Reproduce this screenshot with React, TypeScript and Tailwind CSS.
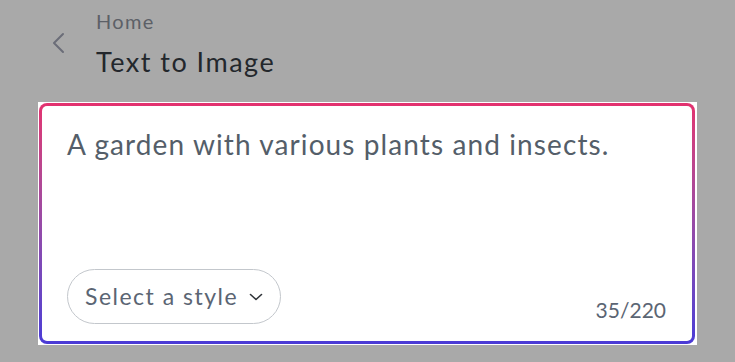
import React from "react";

export default function App() {
  return (
    <div
      className="w-[735px] h-[362px] bg-[#a9a9a9] overflow-hidden"
      style={{ fontFamily: "Lato, 'Noto Sans', sans-serif" }}
    >
      <div className="flex pl-[52px] pt-[8px] h-[102px] items-start">
        <div className="w-[44px] pt-[24px]">
          <svg width="13" height="22" viewBox="0 0 13 22" fill="none">
            <path d="M11 2 L2 11 L11 20" stroke="#6b6d78" strokeWidth="2" strokeLinecap="round" strokeLinejoin="round" />
          </svg>
        </div>
        <div className="flex flex-col">
          <div className="text-[20px] leading-[26px] text-[#5c6067] tracking-[1.3px]">Home</div>
          <div className="mt-[12px] text-[27px] leading-[32px] text-[#23272c] tracking-[1.5px]">Text to Image</div>
        </div>
      </div>
      <div className="ml-[38px] w-[659px] h-[243px] bg-white p-[1px] pr-[2px] pb-[1px]">
        <div className="h-full w-full rounded-[8px] p-[3px] bg-gradient-to-b from-[#e3316f] to-[#4a3ad6]">
          <div className="h-full w-full rounded-[5px] bg-white flex flex-col justify-between pl-[25px] pr-[26px] pt-[20px] pb-[17px]">
            <div className="text-[28px] leading-[36px] text-[#545e69] tracking-[1.1px]">
              A garden with various plants and insects.
            </div>
            <div className="flex items-end justify-between">
              <div className="h-[55px] w-[214px] rounded-full border-[1.5px] border-[#c3c7cc] flex items-center pl-[17px] gap-[11px]">
                <span className="text-[23px] text-[#5b6573] leading-none tracking-[1.5px]">Select a style</span>
                <svg width="14" height="8" viewBox="0 0 14 8" fill="none">
                  <path d="M1.5 1.5 L7 6.5 L12.5 1.5" stroke="#2f3338" strokeWidth="1.6" strokeLinecap="round" strokeLinejoin="round" />
                </svg>
              </div>
              <span className="text-[21px] text-[#5b6573] leading-none pb-[4px]">35/220</span>
            </div>
          </div>
        </div>
      </div>
    </div>
  );
}
